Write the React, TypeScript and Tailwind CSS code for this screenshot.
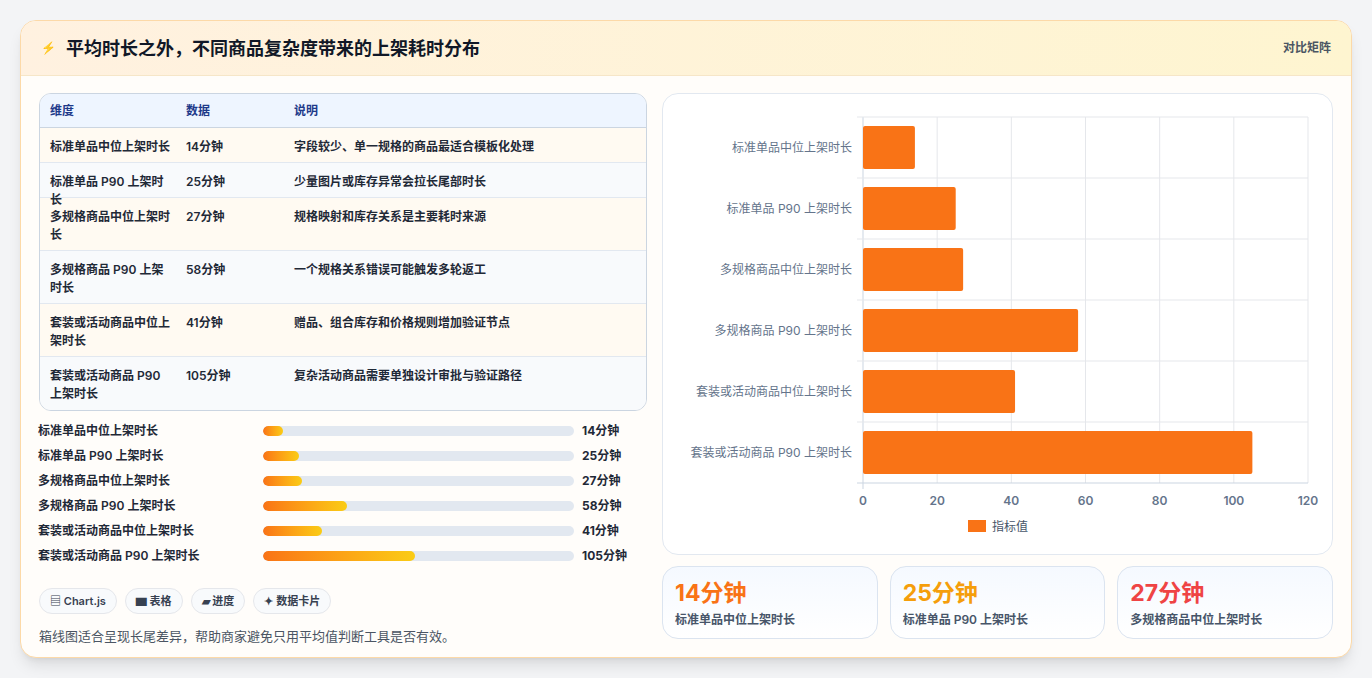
import React from "react";

const rows = [
  ["标准单品中位上架时长", "14分钟", "字段较少、单一规格的商品最适合模板化处理", 14, "标准单品中位上架时长"],
  ["标准单品 P90 上架时长", "25分钟", "少量图片或库存异常会拉长尾部时长", 25, "标准单品 P90 上架时长"],
  ["多规格商品中位上架时长", "27分钟", "规格映射和库存关系是主要耗时来源", 27, "多规格商品中位上架时长"],
  ["多规格商品 P90 上架时长", "58分钟", "一个规格关系错误可能触发多轮返工", 58, "多规格商品 P90 上架时长"],
  ["套装或活动商品中位上架时长", "41分钟", "赠品、组合库存和价格规则增加验证节点", 41, "套装或活动商品中位上架时长"],
  ["套装或活动商品 P90 上架时长", "105分钟", "复杂活动商品需要单独设计审批与验证路径", 105, "套装或活动商品 P90 上架时长"],
] as const;

function Chart() {
  const x0 = 200, w = 445, y0 = 23, rh = 61;
  const sx = (v: number) => x0 + (v / 120) * w;
  return (
    <svg width="671" height="462" className="block">
      {[0, 20, 40, 60, 80, 100, 120].map((t) => (
        <g key={t}>
          <line x1={sx(t)} x2={sx(t)} y1={y0} y2={y0 + rh * 6 + (t === 0 ? 6 : 0)} stroke={t === 0 ? "#cbd5e1" : "#e5e7eb"} />
          <text x={sx(t)} y={411} textAnchor="middle" fontSize="12" fill="#64748b" fontWeight="600">{t}</text>
        </g>
      ))}
      {Array.from({ length: 7 }).map((_, i) => (
        <line key={i} x1={x0 - 6} x2={x0 + w} y1={y0 + rh * i} y2={y0 + rh * i} stroke={i === 6 ? "#cbd5e1" : "#e5e7eb"} />
      ))}
      {rows.map((r, i) => (
        <g key={i}>
          <rect x={x0} y={y0 + rh * i + 9} width={sx(r[3]) - x0} height={43} rx="2" fill="#f97316" />
          <text x={189} y={y0 + rh * i + 35} textAnchor="end" fontSize="12" fill="#64748b">{r[0]}</text>
        </g>
      ))}
      <rect x={305} y={426} width={18} height={12} fill="#f97316" />
      <text x={329} y={437} fontSize="12" fill="#475569">指标值</text>
    </svg>
  );
}

export default function App() {
  return (
    <div className="w-[1372px] h-[678px] bg-[#f3f4f6] p-5" style={{ fontFamily: "Inter, 'Noto Sans CJK SC', sans-serif" }}>
      <div className="h-[638px] bg-[#fffdfa] rounded-2xl border border-[#fcd9a8] shadow-lg overflow-hidden">
        <div className="h-[55px] flex items-center justify-between px-5 bg-gradient-to-r from-[#fff1e0] to-[#fef5d0] border-b border-[#f6e6c8]">
          <div className="flex items-center gap-2.5">
            <span className="text-[#3b82f6] text-xs">⚡</span>
            <span className="text-[18px] font-bold text-[#111827]">平均时长之外，不同商品复杂度带来的上架耗时分布</span>
          </div>
          <span className="text-xs font-semibold text-[#4b5563]">对比矩阵</span>
        </div>
        <div className="flex gap-[15px] px-[18px] pt-[17px]">
          <div className="w-[608px] flex flex-col">
            <div className="rounded-xl border border-[#cbd5e1] overflow-hidden text-xs font-semibold text-[#1f2937]">
              <div className="flex h-[34px] items-center bg-[#eef5ff] text-[#1e3a8a] border-b border-[#cbd5e1]">
                <div className="w-[146px] pl-[10px]">维度</div>
                <div className="w-[108px]">数据</div>
                <div>说明</div>
              </div>
              {rows.map((r, i) => (
                <div key={i} className={`flex pt-[10px] leading-[18px] ${i < 2 ? "h-[35px]" : "h-[53px]"} ${i % 2 === 0 ? "bg-[#fffaf2]" : "bg-[#f8fafc]"} ${i < 5 ? "border-b border-[#e2e8f0]" : ""}`}>
                  <div className="w-[146px] pl-[10px] pr-3">{r[0]}</div>
                  <div className="w-[108px]">{r[1]}</div>
                  <div>{r[2]}</div>
                </div>
              ))}
            </div>
            <div className="flex flex-col gap-[7px] mt-[11px] -ml-px">
              {rows.map((r, i) => (
                <div key={i} className="flex items-center h-[18px] text-xs font-semibold text-[#1f2937]">
                  <div className="w-[225px]">{r[0]}</div>
                  <div className="w-[311px] h-[10px] rounded-full bg-[#e2e8f0] overflow-hidden">
                    <div className="h-full rounded-full bg-gradient-to-r from-[#f97316] to-[#facc15]" style={{ width: `${(r[3] / 215) * 100}%` }} />
                  </div>
                  <div className="ml-2 font-bold">{r[1]}</div>
                </div>
              ))}
            </div>
            <div className="flex gap-2 mt-[23px] text-[11px] font-semibold text-[#374151]">
              {["▤ Chart.js", "▆ 表格", "▰ 进度", "✦ 数据卡片"].map((c) => (
                <span key={c} className="h-[26px] px-2.5 flex items-center rounded-full border border-[#e5e7eb] bg-[#f8fafc]">{c}</span>
              ))}
            </div>
            <div className="mt-[13px] text-[13px] text-[#4b5563]">箱线图适合呈现长尾差异，帮助商家避免只用平均值判断工具是否有效。</div>
          </div>
          <div className="w-[671px] flex flex-col">
            <div className="h-[462px] rounded-2xl border border-[#e2e8f0] bg-white overflow-hidden">
              <Chart />
            </div>
            <div className="grid grid-cols-3 gap-3 mt-[11px]">
              {[["14分钟", "text-[#f97316]", "标准单品中位上架时长"], ["25分钟", "text-[#f59e0b]", "标准单品 P90 上架时长"], ["27分钟", "text-[#ef4444]", "多规格商品中位上架时长"]].map(([v, c, l]) => (
                <div key={v} className="h-[73px] rounded-2xl border border-[#dbe4f0] bg-gradient-to-b from-[#f5f9ff] to-white px-3 pt-[11px]">
                  <div className={`text-[23px] font-bold leading-[30px] ${c}`}>{v}</div>
                  <div className="text-xs font-semibold text-[#475569] mt-1">{l}</div>
                </div>
              ))}
            </div>
          </div>
        </div>
      </div>
    </div>
  );
}
